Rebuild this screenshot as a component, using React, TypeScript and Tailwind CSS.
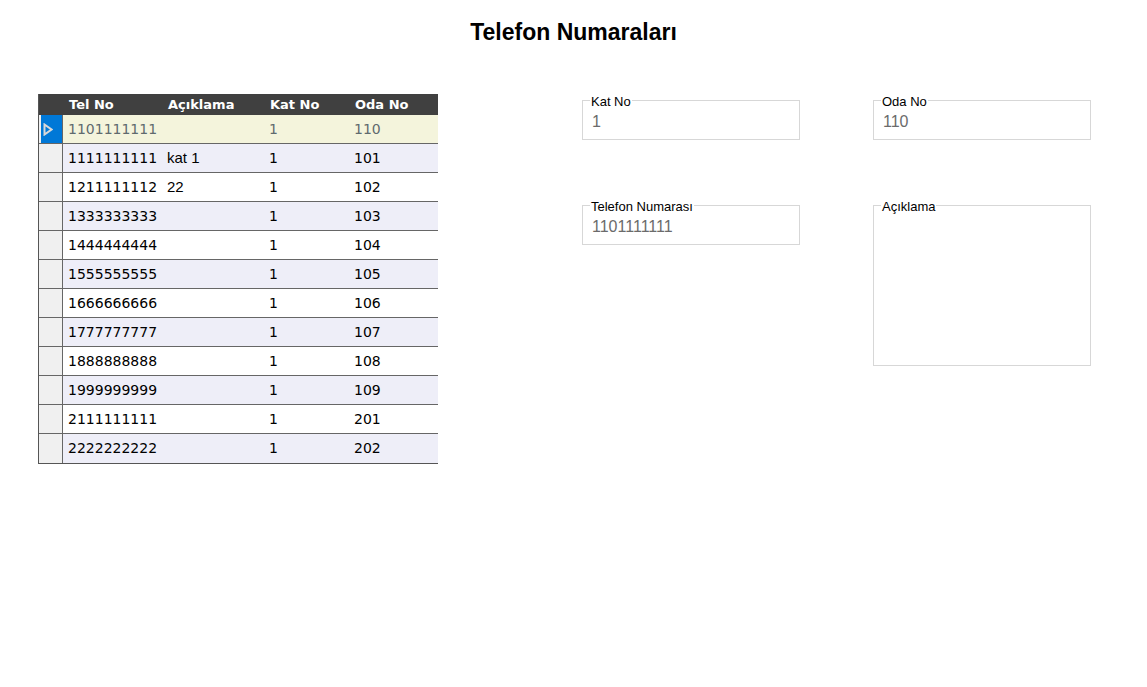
import React from "react";

type Row = { tel: string; aciklama: string; kat: string; oda: string };

const rows: Row[] = [
  { tel: "1101111111", aciklama: "", kat: "1", oda: "110" },
  { tel: "1111111111", aciklama: "kat 1", kat: "1", oda: "101" },
  { tel: "1211111112", aciklama: "22", kat: "1", oda: "102" },
  { tel: "1333333333", aciklama: "", kat: "1", oda: "103" },
  { tel: "1444444444", aciklama: "", kat: "1", oda: "104" },
  { tel: "1555555555", aciklama: "", kat: "1", oda: "105" },
  { tel: "1666666666", aciklama: "", kat: "1", oda: "106" },
  { tel: "1777777777", aciklama: "", kat: "1", oda: "107" },
  { tel: "1888888888", aciklama: "", kat: "1", oda: "108" },
  { tel: "1999999999", aciklama: "", kat: "1", oda: "109" },
  { tel: "2111111111", aciklama: "", kat: "1", oda: "201" },
  { tel: "2222222222", aciklama: "", kat: "1", oda: "202" },
];

const Field: React.FC<{ label: string; value?: string; tall?: boolean }> = ({ label, value, tall }) => (
  <div
    className={`relative w-[218px] border border-[#d7d7d7] bg-white ${tall ? "h-[161px]" : "h-[40px]"}`}
  >
    <span className="absolute left-[7px] top-[-6px] bg-white px-px text-[13px] leading-[14px] text-black">
      {label}
    </span>
    <div className="pl-[9px] pt-[12px] text-[16px] leading-[18px] text-[#6b6b6b]">{value}</div>
  </div>
);

const App: React.FC = () => {
  return (
    <div className="min-h-screen bg-white font-['Liberation_Sans',Arial,sans-serif]">
      <h1 className="pt-[20px] text-center text-[23px] font-bold leading-[25px] text-black">
        Telefon Numaraları
      </h1>

      <div className="mt-[49px] flex items-start">
        {/* grid */}
        <div className="ml-[38px] w-[400px] border-b border-l border-[#555] font-['DejaVu_Sans',Verdana,sans-serif]">
          <div className="flex h-[21px] items-center bg-[#404040] text-[13px] font-bold text-white">
            <div className="w-[25px]" />
            <div className="w-[99px] pl-[5px]">Tel No</div>
            <div className="w-[102px] pl-[5px]">Açıklama</div>
            <div className="w-[85px] pl-[5px]">Kat No</div>
            <div className="flex-1 pl-[5px]">Oda No</div>
          </div>
          {rows.map((r, i) => {
            const selected = i === 0;
            const bg = selected ? "bg-[#f4f4dc]" : i % 2 === 1 ? "bg-[#eeeef8]" : "bg-white";
            const color = selected ? "text-[#5f6a6e]" : "text-black";
            return (
              <div
                key={r.tel}
                className={`flex h-[29px] ${i < rows.length - 1 ? "border-b border-[#666]" : ""}`}
              >
                <div className="flex w-[24px] items-center justify-center border-r border-[#666] bg-[#f0f0f0]">
                  {selected && (
                    <div className="ml-[2px] flex h-full w-full items-center bg-[#0078d7] pl-[2px]">
                      <svg width="10" height="13" viewBox="0 0 10 13">
                        <polygon points="1.5,1.5 8.5,6.5 1.5,11.5" fill="none" stroke="#d8d8d8" strokeWidth="2" />
                      </svg>
                    </div>
                  )}
                </div>
                <div className={`flex flex-1 items-center text-[14px] ${bg} ${color}`}>
                  <div className="w-[99px] pl-[5px]">{r.tel}</div>
                  <div className="w-[102px] pl-[5px] font-['Liberation_Sans',Arial,sans-serif] text-[15px]">
                    {r.aciklama}
                  </div>
                  <div className="w-[85px] pl-[5px]">{r.kat}</div>
                  <div className="flex-1 pl-[5px]">{r.oda}</div>
                </div>
              </div>
            );
          })}
        </div>

        {/* form */}
        <div className="ml-[144px] mt-[6px] grid grid-cols-[218px_218px] gap-x-[73px] gap-y-[65px] items-start">
          <Field label="Kat No" value="1" />
          <Field label="Oda No" value="110" />
          <Field label="Telefon Numarası" value="1101111111" />
          <Field label="Açıklama" tall />
        </div>
      </div>
    </div>
  );
};

export default App;
